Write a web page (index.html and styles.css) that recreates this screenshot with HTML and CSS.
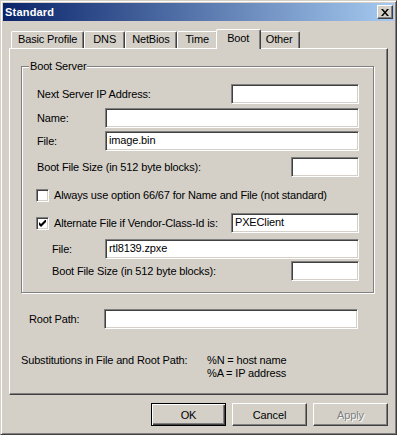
FILE: index.html
```html
<!DOCTYPE html>
<html lang="en">
<head>
  <meta charset="UTF-8" />
  <title>Standard</title>
  <link rel="stylesheet" href="styles.css">
</head>
<body>
  <div class="window">
    <div class="titlebar">
      <span class="title">Standard</span>
      <span class="close">
        <svg width="8" height="7" viewBox="0 0 8 7"><path d="M0 0h2l2 2.5L6 0h2L5 3.5 8 7H6L4 4.5 2 7H0l3-3.5z" fill="#000"/></svg>
      </span>
    </div>
    <div class="tabs">
      <div class="tab">Basic Profile</div>
      <div class="tab">DNS</div>
      <div class="tab">NetBios</div>
      <div class="tab">Time</div>
      <div class="tab active">Boot</div>
      <div class="tab">Other</div>
    </div>
    <div class="panel">
      <div class="group">
        <span class="legend">Boot Server</span>
        <div class="row first">
          <span class="label grow">Next Server IP Address:</span>
          <span class="field wide"></span>
        </div>
        <div class="row">
          <span class="label fixed">Name:</span>
          <span class="field grow"></span>
        </div>
        <div class="row tight">
          <span class="label fixed">File:</span>
          <span class="field grow">image.bin</span>
        </div>
        <div class="row loose">
          <span class="label grow">Boot File Size (in 512 byte blocks):</span>
          <span class="field small"></span>
        </div>
        <div class="row check">
          <span class="checkbox"></span>
          <span class="label">Always use option 66/67 for Name and File (not standard)</span>
        </div>
        <div class="row check">
          <span class="checkbox">
            <svg width="7" height="7" viewBox="0 0 7 7"><path d="M0 2v3l2 2 5-5V-1L2 4z" fill="#000"/></svg>
          </span>
          <span class="label grow">Alternate File if Vendor-Class-Id is:</span>
          <span class="field wide">PXEClient</span>
        </div>
        <div class="row loose sub">
          <span class="label fixed-sub">File:</span>
          <span class="field grow">rtl8139.zpxe</span>
        </div>
        <div class="row tighter sub">
          <span class="label grow">Boot File Size (in 512 byte blocks):</span>
          <span class="field small"></span>
        </div>
      </div>
      <div class="row root">
        <span class="label fixed-root">Root Path:</span>
        <span class="field grow"></span>
      </div>
      <div class="subst">
        <span class="subst-label">Substitutions in File and Root Path:</span>
        <span class="subst-list">%N = host name<br>%A = IP address</span>
      </div>
    </div>
    <div class="buttons">
      <span class="btn default">OK</span>
      <span class="btn">Cancel</span>
      <span class="btn disabled">Apply</span>
    </div>
  </div>
</body>
</html>
```

FILE: styles.css
```css
* { box-sizing: border-box; margin: 0; padding: 0; }
body {
  font-family: 'Liberation Sans', Arial, sans-serif;
  font-size: 11px;
  letter-spacing: -0.15px;
  color: #000;
  background: #d4d0c8;
}
.window {
  width: 397px;
  height: 435px;
  padding: 1px;
  background: #d4d0c8;
  border: 1px solid;
  border-color: #d4d0c8 #404040 #404040 #d4d0c8;
  box-shadow: inset 1px 1px #fff, inset -1px -1px #808080;
}
.titlebar {
  height: 18px;
  margin: 1px;
  display: flex;
  align-items: center;
  justify-content: space-between;
  padding: 0 1px 0 2px;
  background: linear-gradient(90deg, #0a246a, #a6caf0);
}
.title {
  color: #fff;
  font-weight: bold;
  letter-spacing: 0.2px;
}
.close {
  width: 16px;
  height: 14px;
  display: flex;
  align-items: center;
  justify-content: center;
  background: #d4d0c8;
  border: 1px solid;
  border-color: #fff #404040 #404040 #fff;
  box-shadow: inset -1px -1px #808080;
}

/* tabs */
.tabs {
  display: flex;
  align-items: flex-end;
  height: 19px;
  margin: 8px 0 0 9px;
}
.tab {
  min-width: 41px;
  height: 17px;
  line-height: 15px;
  padding: 0 6px;
  text-align: center;
  background: #d4d0c8;
  border: 1px solid;
  border-bottom: none;
  border-color: #fff #404040 #404040 #fff;
  border-radius: 2px 2px 0 0;
  box-shadow: inset -1px 0 #808080;
}
.tab.active {
  position: relative;
  z-index: 1;
  min-width: 45px;
  height: 20px;
  line-height: 17px;
  margin: 0 -2px -1px;
  padding: 0 8px;
}

.panel {
  height: 347px;
  margin: 0 7px;
  padding: 17px 12px 0 11px;
  border: 1px solid;
  border-color: #fff #404040 #404040 #fff;
  box-shadow: inset -1px -1px #808080;
}
.group {
  position: relative;
  width: 353px;
  padding: 17px 14px 11px 15px;
  border: 1px solid #808080;
  box-shadow: inset 1px 1px #fff, 1px 1px #fff;
}
.legend {
  position: absolute;
  top: -7px;
  left: 7px;
  padding: 0 1px;
  line-height: 13px;
  background: #d4d0c8;
}

.row {
  display: flex;
  align-items: center;
  height: 20px;
  margin-top: 4px;
}
.row.first { margin-top: 0; }
.row.tight { margin-top: 3px; }
.row.tighter { margin-top: 2px; }
.row.loose { margin-top: 6px; }
.row.check { margin-top: 8px; margin-left: -1px; }
.row.sub { padding-left: 15px; }
.label { white-space: nowrap; }
.grow { flex: 1; }
.fixed { width: 68px; }
.fixed-sub { width: 53px; }
.fixed-root { width: 75px; }

.field {
  height: 20px;
  padding: 0 3px;
  line-height: 16px;
  background: #fff;
  border: 1px solid;
  border-color: #808080 #fff #fff #808080;
  box-shadow: inset 1px 1px #404040, inset -1px -1px #d4d0c8;
  white-space: nowrap;
}
.field.wide { width: 128px; }
.field.small { width: 68px; }

.checkbox {
  width: 13px;
  height: 13px;
  margin-right: 5px;
  display: flex;
  align-items: center;
  justify-content: center;
  background: #fff;
  border: 1px solid;
  border-color: #808080 #fff #fff #808080;
  box-shadow: inset 1px 1px #404040, inset -1px -1px #d4d0c8;
}

.row.root {
  margin: 16px 17px 0 8px;
}
.subst {
  display: flex;
  margin-top: 25px;
  line-height: 13px;
}
.subst-label { width: 186px; }

.buttons {
  display: flex;
  justify-content: flex-end;
  gap: 6px;
  margin: 8px 7px 0 0;
}
.btn {
  width: 75px;
  height: 23px;
  display: flex;
  align-items: center;
  justify-content: center;
  background: #d4d0c8;
  border: 1px solid;
  border-color: #fff #404040 #404040 #fff;
  box-shadow: inset -1px -1px #808080;
}
.btn.default {
  border-color: #000;
  box-shadow: inset 1px 1px #fff, inset -1px -1px #404040, inset -2px -2px #808080;
}
.btn.disabled {
  color: #808080;
  text-shadow: 1px 1px #fff;
}
```
